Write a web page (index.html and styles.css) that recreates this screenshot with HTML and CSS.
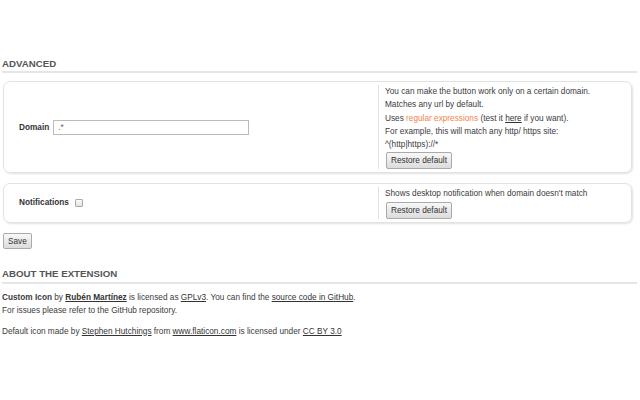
FILE: index.html
```html
<!DOCTYPE html>
<html>
<head>
<meta charset="utf-8">
<title>Custom Icon options</title>
<link rel="stylesheet" href="styles.css">
</head>
<body>

<h3>Advanced</h3>

<div class="card">
  <div class="field">
    <label for="domain">Domain</label>
    <input id="domain" type="text" value=".*">
  </div>
  <div class="help">
    <p>You can make the button work only on a certain domain.</p>
    <p>Matches any url by default.</p>
    <p>Uses <a class="hl" href="#">regular expressions</a> (test it <a href="#">here</a> if you want).</p>
    <p>For example, this will match any http/ https site:</p>
    <p>^(http|https)://*</p>
    <button type="button">Restore default</button>
  </div>
</div>

<div class="card">
  <div class="field">
    <label for="notify">Notifications</label>
    <input id="notify" type="checkbox">
  </div>
  <div class="help">
    <p>Shows desktop notification when domain doesn't match</p>
    <button type="button">Restore default</button>
  </div>
</div>

<button type="button" class="save">Save</button>

<h3 class="about">About the extension</h3>

<p><b>Custom Icon</b> by <a href="#"><b>Rubén Martínez</b></a> is licensed as <a href="#">GPLv3</a>. You can find the <a href="#">source code in GitHub</a>.<br>
For issues please refer to the GitHub repository.</p>

<p>Default icon made by <a href="#">Stephen Hutchings</a> from <a href="#">www.flaticon.com</a> is licensed under <a href="#">CC BY 3.0</a></p>

</body>
</html>
```

FILE: styles.css
```css
body {
  margin: 0;
  padding: 0 3px 0 2px;
  font-family: "Liberation Sans", Arial, sans-serif;
  font-size: 8.25px;
  line-height: 13px;
  color: #3c3c3c;
  background: white;
}

h3 {
  margin: 58px 0 8px;
  padding-bottom: 1px;
  font-size: 9.7px;
  line-height: 12px;
  text-transform: uppercase;
  color: #555;
  border-bottom: 2px solid #e6e6e6;
}

h3.about {
  margin-top: 19px;
  padding-bottom: 2px;
  margin-bottom: 7px;
}

p {
  margin: 0 0 8px;
}

a {
  color: #333;
}

a.hl {
  color: #f5834a;
  text-decoration: none;
}

.card {
  display: flex;
  margin: 0 5px 10px 1px;
  padding: 3px 0;
  border: 1px solid #e2e2e2;
  border-radius: 7px;
  box-shadow: 1px 1px 2px rgba(0, 0, 0, 0.12);
}

.field {
  box-sizing: border-box;
  width: 374px;
  padding-left: 15px;
  display: flex;
  align-items: center;
  gap: 4px;
}

.field label {
  font-weight: bold;
  color: #333;
}

.field input[type=text] {
  box-sizing: border-box;
  width: 196px;
  height: 15px;
  padding: 0 4px;
  border: 1px solid #bbb;
  font: inherit;
  color: #666;
}

.field input[type=checkbox] {
  appearance: none;
  width: 8px;
  height: 8px;
  margin: 0 0 0 2px;
  border: 1px solid #aaa;
  border-radius: 1px;
  background: linear-gradient(#fafafa, #e2e2e2);
}

.help {
  flex: 1;
  padding-left: 6px;
  border-left: 1px solid #e2e2e2;
  line-height: 13.25px;
}

.help p {
  margin: 0;
}

button {
  margin: 1px 0 0 1px;
  padding: 1px 4px;
  font: inherit;
  line-height: 13px;
  color: #333;
  background: linear-gradient(#f8f8f8, #dcdcdc);
  border: 1px solid #aaa;
  border-radius: 2px;
}

.save {
  margin: 0 0 0 1px;
  padding: 1px 4px 0;
}
```
